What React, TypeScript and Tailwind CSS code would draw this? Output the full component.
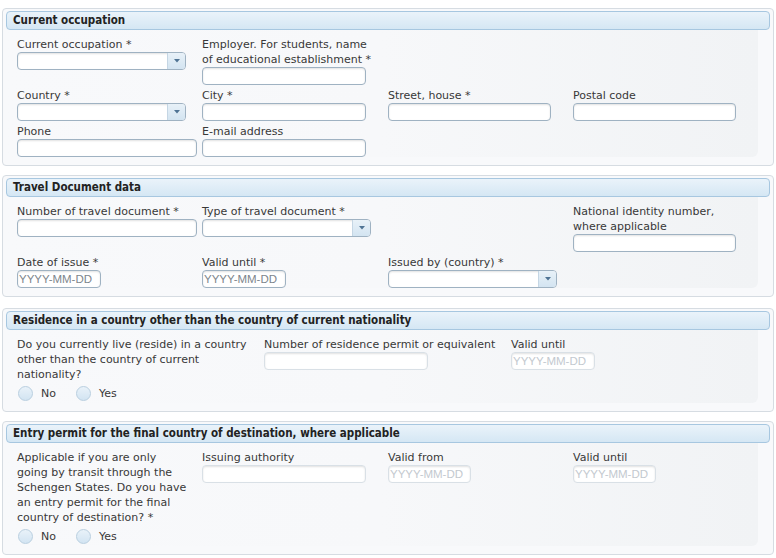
import React from "react";

const font = { fontFamily: '"DejaVu Sans", Verdana, sans-serif' };
const headFont = { fontFamily: '"DejaVu Sans Condensed", "DejaVu Sans", Verdana, sans-serif' };
const inputFont = { fontFamily: '"Liberation Sans", Arial, sans-serif' };

function Panel({ title, children, className = "" }: { title: string; children: React.ReactNode; className?: string }) {
  return (
    <div className={`mx-[2px] rounded-[4px] border border-[#d6dce2] bg-[#f8f9fb] px-[3px] pt-[2px] pb-[8px] ${className}`}>
      <div
        className="h-[19px] rounded-[4px] border border-[#a7c7e0] bg-gradient-to-b from-[#eaf3fa] to-[#d5e7f4] pl-[6px] text-[11.5px] font-bold leading-[17px] text-[#222]"
        style={headFont}
      >
        {title}
      </div>
      <div className="mr-[12px] rounded-br-[6px] bg-gradient-to-r from-[#f8f9fb] via-[#f7f8fa] to-[#f1f3f5] pl-[11px] pt-[7px]">
        {children}
      </div>
    </div>
  );
}

function Label({ children }: { children: React.ReactNode }) {
  return <div className="text-[11px] leading-[15px] text-[#383838]">{children}</div>;
}

function TextInput({ w, placeholder, disabled }: { w: string; placeholder?: string; disabled?: boolean }) {
  return (
    <div
      className={`${w} h-[18px] rounded-[4px] border bg-white pl-[1px] text-[11.5px] leading-[16px] shadow-[inset_0_1px_2px_rgba(0,0,0,0.12)] ${
        disabled ? "border-[#d9e0e6] text-[#c3c9cf]" : "border-[#9fb2c2] text-[#7d858c]"
      }`}
      style={inputFont}
    >
      {placeholder}
    </div>
  );
}

function Select({ w }: { w: string }) {
  return (
    <div className={`${w} flex h-[18px] overflow-hidden rounded-[4px] border border-[#9fb2c2] bg-white shadow-[inset_0_1px_2px_rgba(0,0,0,0.12)]`}>
      <div className="flex-1" />
      <div className="flex w-[18px] items-center justify-center border-l border-[#c5d6e4] bg-gradient-to-b from-[#e8f1f8] to-[#d3e4f1]">
        <svg width="6" height="4" viewBox="0 0 6 4">
          <path d="M0 0 L6 0 L3 3.5 Z" fill="#4f7394" />
        </svg>
      </div>
    </div>
  );
}

function Radio({ label }: { label: string }) {
  return (
    <div className="flex items-center">
      <span className="h-[15px] w-[15px] rounded-full border border-[#b9cfe0] bg-gradient-to-b from-[#e9f2f9] to-[#d2e4f2]" />
      <span className="ml-[8px] text-[11px] leading-[15px] text-[#383838]">{label}</span>
    </div>
  );
}

function Field({ label, children }: { label: React.ReactNode; children: React.ReactNode }) {
  return (
    <div>
      <Label>{label}</Label>
      {children}
    </div>
  );
}

function RadioRow() {
  return (
    <div className="mt-[1px] flex h-[20px] items-center gap-[20px] pl-[1px]">
      <Radio label="No" />
      <Radio label="Yes" />
    </div>
  );
}

export default function App() {
  return (
    <div className="flex w-[776px] flex-col gap-[9px] bg-white pt-[8px]" style={font}>
      <Panel title="Current occupation">
        <div className="grid grid-cols-[185px_186px_185px_185px] gap-y-[3px]">
          <Field label="Current occupation *">
            <Select w="w-[169px]" />
          </Field>
          <Field label={<>Employer. For students, name<br />of educational establishment *</>}>
            <TextInput w="w-[164px]" />
          </Field>
          <div />
          <div />
          <Field label="Country *">
            <Select w="w-[169px]" />
          </Field>
          <Field label="City *">
            <TextInput w="w-[164px]" />
          </Field>
          <Field label="Street, house *">
            <TextInput w="w-[163px]" />
          </Field>
          <Field label="Postal code">
            <TextInput w="w-[163px]" />
          </Field>
          <Field label="Phone">
            <TextInput w="w-[180px]" />
          </Field>
          <Field label="E-mail address">
            <TextInput w="w-[164px]" />
          </Field>
        </div>
      </Panel>

      <Panel title="Travel Document data">
        <div className="grid grid-cols-[185px_186px_185px_185px] gap-y-[3px]">
          <Field label="Number of travel document *">
            <TextInput w="w-[180px]" />
          </Field>
          <Field label="Type of travel document *">
            <Select w="w-[169px]" />
          </Field>
          <div />
          <Field label={<>National identity number,<br />where applicable</>}>
            <TextInput w="w-[163px]" />
          </Field>
          <Field label="Date of issue *">
            <TextInput w="w-[84px]" placeholder="YYYY-MM-DD" />
          </Field>
          <Field label="Valid until *">
            <TextInput w="w-[84px]" placeholder="YYYY-MM-DD" />
          </Field>
          <Field label="Issued by (country) *">
            <Select w="w-[169px]" />
          </Field>
          <div />
        </div>
      </Panel>

      <Panel title="Residence in a country other than the country of current nationality" className="mt-[2px]">
        <div className="grid grid-cols-[247px_247px_200px]">
          <div>
            <Label>
              Do you currently live (reside) in a country
              <br />
              other than the country of current
              <br />
              nationality?
            </Label>
            <RadioRow />
          </div>
          <Field label="Number of residence permit or equivalent">
            <TextInput w="w-[164px]" disabled />
          </Field>
          <Field label="Valid until">
            <TextInput w="w-[84px]" placeholder="YYYY-MM-DD" disabled />
          </Field>
        </div>
      </Panel>

      <Panel title="Entry permit for the final country of destination, where applicable">
        <div className="grid grid-cols-[185px_186px_185px_185px]">
          <div>
            <Label>
              Applicable if you are only
              <br />
              going by transit through the
              <br />
              Schengen States. Do you have
              <br />
              an entry permit for the final
              <br />
              country of destination? *
            </Label>
            <RadioRow />
          </div>
          <Field label="Issuing authority">
            <TextInput w="w-[164px]" disabled />
          </Field>
          <Field label="Valid from">
            <TextInput w="w-[83px]" placeholder="YYYY-MM-DD" disabled />
          </Field>
          <Field label="Valid until">
            <TextInput w="w-[83px]" placeholder="YYYY-MM-DD" disabled />
          </Field>
        </div>
      </Panel>
    </div>
  );
}
